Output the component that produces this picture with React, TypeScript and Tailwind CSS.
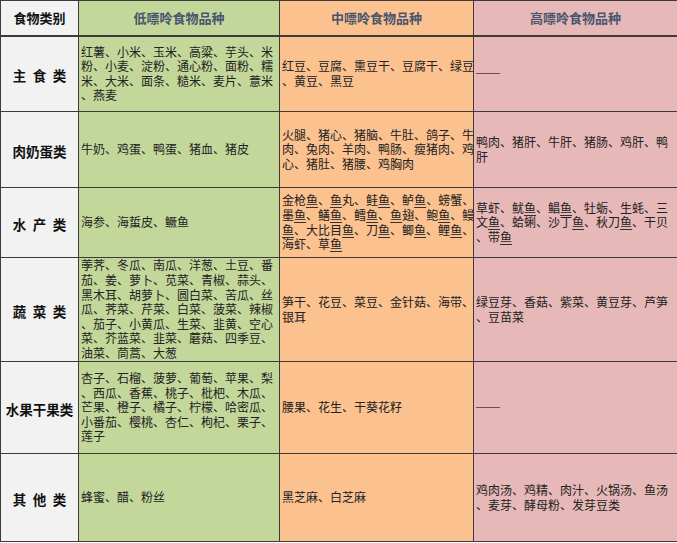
import type { ReactNode } from 'react'

type Cell = string[] | 'dash'

type Row = {
  label: string
  spread?: boolean
  height: string
  low: Cell
  mid: Cell
  high: Cell
  fish?: boolean
}

const rows: Row[] = [
  {
    label: '主食类',
    spread: true,
    height: 'h-[76px]',
    low: [
      '红薯、小米、玉米、高粱、芋头、米',
      '粉、小麦、淀粉、通心粉、面粉、糯',
      '米、大米、面条、糙米、麦片、薏米',
      '、燕麦',
    ],
    mid: ['红豆、豆腐、熏豆干、豆腐干、绿豆', '、黄豆、黑豆'],
    high: 'dash',
  },
  {
    label: '肉奶蛋类',
    height: 'h-[76px]',
    low: ['牛奶、鸡蛋、鸭蛋、猪血、猪皮'],
    mid: [
      '火腿、猪心、猪脑、牛肚、鸽子、牛',
      '肉、兔肉、羊肉、鸭肠、瘦猪肉、鸡',
      '心、猪肚、猪腰、鸡胸肉',
    ],
    high: ['鸭肉、猪肝、牛肝、猪肠、鸡肝、鸭', '肝'],
  },
  {
    label: '水产类',
    spread: true,
    height: 'h-[70px]',
    fish: true,
    low: ['海参、海蜇皮、鳜鱼'],
    mid: [
      '金枪鱼、鱼丸、鲑鱼、鲈鱼、螃蟹、',
      '墨鱼、鳝鱼、鳕鱼、鱼翅、鲍鱼、鳗',
      '鱼、大比目鱼、刀鱼、鲫鱼、鲤鱼、',
      '海虾、草鱼',
    ],
    high: [
      '草虾、鱿鱼、鲳鱼、牡蛎、生蚝、三',
      '文鱼、蛤蜊、沙丁鱼、秋刀鱼、干贝',
      '、带鱼',
    ],
  },
  {
    label: '蔬菜类',
    spread: true,
    height: 'h-[104px]',
    low: [
      '荸荠、冬瓜、南瓜、洋葱、土豆、番',
      '茄、姜、萝卜、苋菜、青椒、蒜头、',
      '黑木耳、胡萝卜、圆白菜、苦瓜、丝',
      '瓜、荠菜、芹菜、白菜、菠菜、辣椒',
      '、茄子、小黄瓜、生菜、韭黄、空心',
      '菜、芥蓝菜、韭菜、蘑菇、四季豆、',
      '油菜、茼蒿、大葱',
    ],
    mid: ['笋干、花豆、菜豆、金针菇、海带、', '银耳'],
    high: ['绿豆芽、香菇、紫菜、黄豆芽、芦笋', '、豆苗菜'],
  },
  {
    label: '水果干果类',
    height: 'h-[92px]',
    low: [
      '杏子、石榴、菠萝、葡萄、苹果、梨',
      '、西瓜、香蕉、桃子、枇杷、木瓜、',
      '芒果、橙子、橘子、柠檬、哈密瓜、',
      '小番茄、樱桃、杏仁、枸杞、栗子、',
      '莲子',
    ],
    mid: ['腰果、花生、干葵花籽'],
    high: 'dash',
  },
  {
    label: '其他类',
    spread: true,
    height: 'h-[88px]',
    low: ['蜂蜜、醋、粉丝'],
    mid: ['黑芝麻、白芝麻'],
    high: ['鸡肉汤、鸡精、肉汁、火锅汤、鱼汤', '、麦芽、酵母粉、发芽豆类'],
  },
]

// underline the 鱼 words like the spell-check marks in the source sheet
function renderLine(line: string, fish?: boolean): ReactNode {
  if (!fish) return line
  return line.split(/(鱼)/).map((part, i) =>
    part === '鱼' ? (
      <span key={i} className="underline underline-offset-2 decoration-[#333]">
        鱼
      </span>
    ) : (
      <span key={i}>{part}</span>
    )
  )
}

function FoodCell({ cell, bg, fish }: { cell: Cell; bg: string; fish?: boolean }) {
  return (
    <td className={`border border-[#3b3b3b] ${bg} px-[2px] align-middle`}>
      {cell === 'dash' ? (
        <div className="h-px w-[24px] bg-[#6b4f50]" />
      ) : (
        <div className="text-[12px] leading-[14.6px] text-[#222] whitespace-nowrap">
          {cell.map((line, i) => (
            <div key={i}>{renderLine(line, fish)}</div>
          ))}
        </div>
      )}
    </td>
  )
}

export default function App() {
  return (
    <div
      className="w-[677px] h-[543px] bg-white overflow-hidden"
      style={{ fontFamily: '"Noto Sans CJK SC", "Liberation Sans", sans-serif' }}
    >
      <table className="table-fixed border-collapse w-[677px]">
        <colgroup>
          <col className="w-[78px]" />
          <col className="w-[201px]" />
          <col className="w-[194px]" />
          <col className="w-[204px]" />
        </colgroup>
        <thead>
          <tr className="h-[35px]">
            <th className="border border-[#3b3b3b] border-b-2 bg-[#f2f2f2] text-[13px] font-bold text-[#111]">
              食物类别
            </th>
            <th className="border border-[#3b3b3b] border-b-2 bg-[#c4d79b] text-[13px] font-bold text-[#47556e]">
              低嘌呤食物品种
            </th>
            <th className="border border-[#3b3b3b] border-b-2 bg-[#fbc18f] text-[13px] font-bold text-[#47556e]">
              中嘌呤食物品种
            </th>
            <th className="border border-[#3b3b3b] border-b-2 bg-[#e6b8b7] text-[13px] font-bold text-[#47556e]">
              高嘌呤食物品种
            </th>
          </tr>
        </thead>
        <tbody>
          {rows.map((row) => (
            <tr key={row.label} className={row.height}>
              <td className="border border-[#3b3b3b] bg-[#f2f2f2] text-center align-middle">
                <span
                  className={
                    row.spread
                      ? 'inline-block text-[13.5px] font-bold text-[#111] tracking-[6.5px] -mr-[6.5px]'
                      : 'inline-block text-[13.5px] font-bold text-[#111]'
                  }
                >
                  {row.label}
                </span>
              </td>
              <FoodCell cell={row.low} bg="bg-[#c4d79b]" />
              <FoodCell cell={row.mid} bg="bg-[#fbc18f]" fish={row.fish} />
              <FoodCell cell={row.high} bg="bg-[#e6b8b7]" fish={row.fish} />
            </tr>
          ))}
        </tbody>
      </table>
    </div>
  )
}
